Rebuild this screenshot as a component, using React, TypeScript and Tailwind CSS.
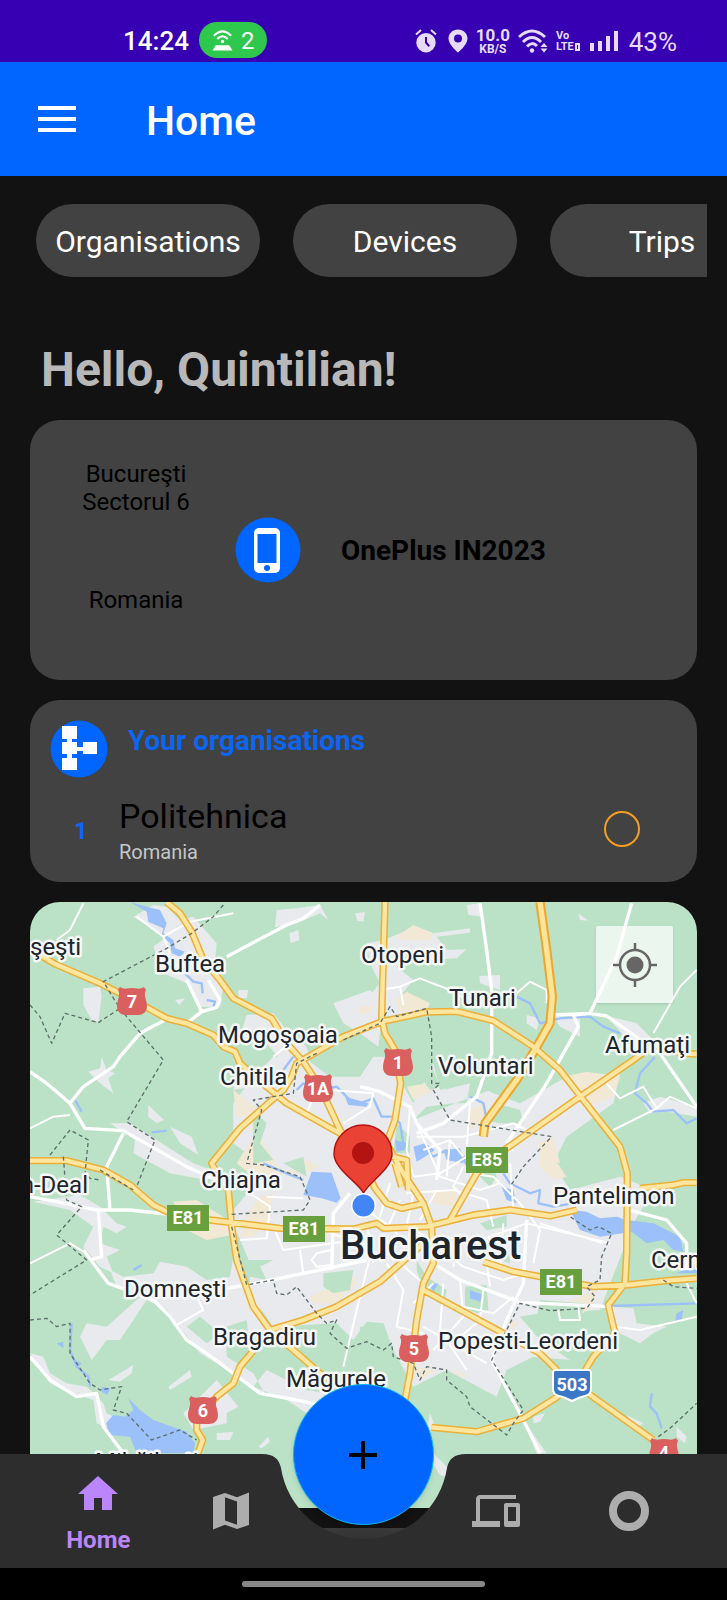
import type { ReactNode } from "react";

const YELLOW_ROADS = [
  "M60 195L105 222L240 280L340 330L440 385L500 400L580 435L610 470L645 485L660 520L740 590L800 640L960 730L1020 800L1065 895L1100 940L1145 955L1210 940",
  "M440 36L480 70L515 125L550 210L600 270L640 325L755 385L800 460L850 515L900 590L960 720L1010 790",
  "M580 830L575 820L660 715L790 600L815 560L830 520L970 440L1085 395L1220 366L1310 364L1420 392L1540 470L1620 540L1690 630L1800 770L1822 850L1820 1090L1815 1180L1765 1245L1785 1330L1720 1400L1690 1450L1610 1522L1510 1585L1370 1625L1235 1612",
  "M580 830L625 900L635 1010L650 1110L700 1250L750 1320L820 1380L900 1450L960 1490",
  "M30 812L140 812L250 840L330 885L400 945L440 965L570 990L780 1015L1000 1017L1070 1000L1090 1015L1220 1010L1360 975L1470 960L1590 978L1670 960",
  "M1095 36L1085 385L1095 430L1125 480L1142 580L1125 690L1100 760L1150 850L1210 940L1235 1010L1240 1120L1210 1180L1190 1290L1170 1450L1155 1530",
  "M2030 492L1985 490L1900 465L1840 510L1680 620L1460 775L1370 850L1290 990",
  "M1390 1115L1480 1145L1560 1160L1720 1190L1820 1185L1940 1172L2030 1165",
  "M1860 895L1960 885L1990 878L2030 878",
  "M1210 1200L1450 1330L1560 1390L1620 1450L1760 1550L1900 1650",
  "M750 1320L850 1290L950 1250L1080 1175L1210 1060",
  "M710 1370L660 1430L640 1480L590 1520L530 1590L530 1620L548 1650L530 1700",
  "M1115 800L1160 810L1165 900M1125 820L1145 890",
];

const MOTORWAY =
  "M1560 36L1580 180L1597 320L1590 400L1545 480L1490 570L1395 700L1390 740";

const WHITE_ROADS = [
  "M620 200L800 105L850 85L900 45",
  "M565 270L600 330L590 352L545 365L500 400M545 365L500 270",
  "M445 385L360 430L300 500L280 530L190 590L150 640",
  "M30 545L80 580L150 640L195 715L310 722L500 830L590 870",
  "M310 730L260 830L270 960",
  "M30 920L110 935L230 960L330 960L440 972",
  "M235 960L245 1100L210 1110",
  "M190 1080L265 1180L320 1200L400 1230L450 1280L500 1350L560 1390L640 1450L720 1510L830 1530L1000 1570",
  "M590 1200L680 1185L900 1140L1040 1110",
  "M30 1400L90 1470L170 1520L230 1510L250 1610L310 1690",
  "M990 910L940 970L935 1140",
  "M1380 40L1400 180L1415 300L1415 490L1370 620L1270 700L1190 730",
  "M1835 40L1790 200L1710 370L1660 375L1675 410L1580 580L1460 760",
  "M1600 375L1710 370L1760 378L1820 420L1920 490L2030 650",
  "M1020 590L1080 605L1170 650L1190 700L1260 780L1250 870",
  "M1820 958L1940 990L2000 1060L2000 1140",
  "M1240 1120L1320 1170L1500 1237L1770 1250",
  "M1520 990L1510 1180L1460 1290L1415 1410L1510 1590L1560 1690",
];

const THIN_ROADS = [
  "M190 40L150 120L110 150M30 715L100 680L150 675M350 80L430 140L450 190M430 140L510 95L640 70",
  "M30 1120L150 1060L190 1085M470 1305L550 1260L530 1220M760 500L820 450M860 670L880 620L930 600L1060 610M970 700L1050 650L1060 610",
  "M1080 300L1140 290L1200 265L1290 300L1340 330M1490 310L1530 275L1580 300L1580 340M1140 290L1150 345",
  "M1760 580L1800 625L1870 590L1910 655L1780 720M1910 655L1950 620L2030 655M2030 240L1980 290L1900 430M1780 1250L1780 1310L1860 1320L2030 1280M2000 1180L2030 1240M1350 640L1340 770M1190 740L1330 740L1480 700L1520 720",
  "M660 1050L740 1045L750 950L690 910M740 920L850 925M760 1010L790 1080L1010 1050M840 1080L850 1150M935 1080L890 1090L875 1110L890 1130L935 1125M1050 1100L1010 1260L970 1430M1040 1000L1060 1120M930 1030L1060 1070",
  "M1170 650L1160 780L1180 860M1190 700L1260 860L1380 900L1440 880M1160 910L1300 900L1400 930L1420 1010M1180 860L1260 850L1340 800L1480 780M1210 780L1290 750L1330 800M1350 850L1420 860L1500 940L1560 1020L1540 1120M1470 820L1480 960",
  "M1240 1040L1380 1050L1520 1000L1770 1060M1260 1080L1330 1130L1450 1170L1510 1150M1320 1030L1300 1130M1390 1050L1410 1190M1450 1000L1440 1140M1560 1000L1750 1060M1100 1120L1150 1200L1130 1310L1210 1330M1130 1110L1210 1180",
  "M1270 1180L1260 1320L1340 1440M1320 1170L1330 1280L1240 1380M1330 1250L1420 1270L1480 1220M1390 1200L1380 1290L1310 1350M1240 1180L1180 1240M1210 1310L1400 1420M1615 1260L1620 1290L1680 1290L1675 1250",
  "M1040 960L1110 1010L1180 1080M1110 880L1080 980M1140 930L1100 1020M1180 910L1160 1010L1260 1060M1250 900L1200 990M1330 830L1300 890L1340 930M1420 810L1370 850M1290 750L1280 860",
];

const URBAN = [
  "M700 560L760 500L850 500L930 560L1020 560L1060 500L1100 500L1180 640L1240 520L1260 600L1350 570L1420 610L1500 640L1640 560L1800 550L1780 640L1640 740L1600 820L1650 900L1800 860L1900 900L1840 1000L1790 1130L1740 1260L1560 1270L1500 1280L1560 1350L1650 1410L1540 1400L1460 1440L1430 1520L1280 1440L1180 1490L1120 1380L1090 1300L1040 1295L1000 1350L950 1300L760 1310L690 1210L690 1120L640 1000L640 930L720 820L640 760L640 640Z",
  "M340 80L400 45L440 50L480 90L520 80L590 160L585 215L610 290L600 350L540 350L500 280L430 250L400 170L440 140Z",
  "M770 60L830 55L900 45L925 90L900 70L830 100L765 112ZM808 130L835 120L838 150L812 160ZM1005 70L1035 66L1030 95L1012 92ZM655 300L685 300L680 325L655 325Z",
  "M190 295L240 290L245 320L235 395L215 390L190 345ZM465 330L495 325L478 345ZM205 545L240 535L245 500L260 540L285 550L265 565L280 610L240 580Z",
  "M385 645L432 690L410 700L385 680ZM450 710L515 740L535 795L480 760ZM270 700L330 700L520 820L600 850L560 870L450 850L340 790L345 750Z",
  "M680 375L760 370L800 420L860 470L880 560L790 600L700 590L640 600L650 540L730 540L790 520L740 460L660 440Z",
  "M1040 160L1090 150L1190 110L1240 130L1350 115L1350 128L1250 140L1280 180L1340 178L1310 205L1230 210L1170 180L1130 230L1180 270L1130 330L1210 340L1220 370L1080 380L1020 350L1080 280L1050 220Z",
  "M1340 45L1380 40L1390 80L1345 75ZM1378 258L1440 255L1440 300L1380 280ZM1520 375L1560 385L1550 420L1520 400ZM1600 380L1680 380L1680 440L1620 410ZM1760 378L1850 400L1900 450L1950 500L1840 470ZM1675 70L1705 92L1680 90Z",
  "M1870 640L1920 620L2030 650L2030 680L1940 665L1890 670ZM940 340L1050 300L1090 340L1075 470L1020 430L970 400Z",
  "M40 935L180 915L240 950L290 1000L320 1010L290 1030L250 1010L240 1060L300 1080L260 1100L280 1150L240 1130L190 1070L220 1010L150 960Z",
  "M270 1140L310 1160L400 1150L420 1115L500 1130L560 1170L630 1160L640 1100L700 1210L750 1320L620 1400L700 1450L740 1520L700 1500L640 1450L540 1390L440 1260L380 1230L300 1350L260 1350L215 1410L180 1340L200 1300L260 1310L360 1220L290 1190Z",
  "M265 1470L340 1425L335 1450L300 1475ZM445 1490L510 1440L515 1460L450 1500ZM590 1470L655 1550L620 1570L620 1600L520 1620L490 1570ZM590 1630L640 1625L630 1650L590 1650ZM715 1670L745 1640L750 1655L725 1675ZM740 1440L700 1490L800 1530L860 1570L920 1510L860 1500Z",
  "M30 1390L70 1400L90 1450L140 1480L200 1490L250 1540L260 1570L300 1590L280 1620L230 1600L220 1530L130 1500L90 1480Z",
  "M1780 1250L1840 1255L1850 1300L1940 1310L1900 1330L1860 1360L1780 1320ZM1230 1570L1250 1620L1220 1620ZM1820 1575L1870 1600L1850 1615ZM1970 1610L2000 1640L1995 1660L1970 1640ZM1540 1580L1575 1570L1560 1595L1540 1600ZM1510 1590L1580 1690L1550 1690Z",
  "M1240 1690L1290 1740L1310 1770L1260 1755L1235 1715ZM900 1760L950 1740L920 1830L890 1800Z",
];

const BEIGE = [
  "M640 600L690 640L720 660L720 740L780 840L830 840L860 810L900 830L840 850L700 860L650 820L700 740L690 680L650 680Z",
  "M1130 140L1180 105L1240 130L1230 150L1150 150ZM1125 330L1160 305L1230 340L1220 360L1140 365ZM1630 560L1700 545L1800 560L1780 620L1700 650L1680 610Z",
  "M1160 590L1220 580L1250 595L1180 630ZM1350 660L1400 640L1390 690L1350 720ZM1550 760L1600 740L1620 820L1570 800ZM1230 900L1310 900L1300 950L1240 940Z",
  "M1470 1290L1500 1300L1470 1320ZM1630 1240L1730 1200L1720 1250L1670 1280ZM870 1220L1000 1160L1010 1180L950 1240L880 1240ZM1300 1440L1350 1460L1320 1460ZM460 935L530 930L640 1000L660 1030L560 1050L500 1020Z",
  "M1020 350L1060 345L1050 370L1020 370ZM1560 760L1600 800L1640 860L1600 870L1560 830ZM1180 1430L1250 1440L1200 1470ZM720 920L760 910L750 990L700 1040L660 1040L690 960Z",
];

const GREEN = [
  "M1180 690L1220 650L1300 640L1340 640L1350 580L1270 600L1380 520L1410 600L1280 650L1180 690Z",
  "M1390 690L1430 640L1500 660L1510 700L1440 700ZM1200 560L1240 540L1260 590L1230 600Z",
  "M1335 1190L1400 1185L1405 1260L1370 1270L1335 1255ZM1190 1110L1220 1160L1280 1200L1270 1250L1210 1200L1190 1140ZM1380 1000L1460 975L1460 1010L1400 1020ZM1410 1100L1470 1080L1470 1120Z",
  "M910 1150L1000 1140L990 1200L940 1210L910 1190ZM680 1110L760 1110L720 1130L740 1170L690 1160ZM620 1310L680 1290L690 1370L620 1400ZM1020 1310L1090 1300L1110 1370L1060 1400L1020 1360ZM1560 1230L1690 1240L1680 1330L1590 1340L1550 1280Z",
  "M1130 700L1170 740L1170 790L1120 790ZM700 660L740 700L720 760L760 810L700 820ZM590 860L690 900L640 960L590 910ZM500 1310L540 1280L600 1330L560 1360ZM790 820L850 800L860 860Z",
  "M1380 860L1420 830L1430 860L1410 890Z",
];

const WATER = [
  "M330 36L380 50L420 60L440 100L430 130L460 150L465 175L495 185L480 200L455 190L450 160L425 135L430 115L385 95L380 65Z",
  "M875 845L935 848L962 925L950 938L905 925L850 915Z",
  "M325 1525L360 1560L400 1590L500 1625L525 1660L520 1690L350 1690L330 1640L270 1635L258 1600L280 1575L315 1580L340 1560Z",
  "M245 1490L270 1495L262 1515L245 1505ZM110 1360L130 1355L130 1375ZM155 1405L185 1420L175 1430Z",
  "M1125 750L1160 760L1155 780L1130 785ZM1180 770L1215 760L1245 780L1215 800L1190 815ZM1270 780L1320 775L1330 820L1280 810ZM1445 890L1480 900L1490 940L1460 930Z",
  "M1650 960L1700 965L1740 985L1790 980L1820 990L1900 1000L1980 1040L1990 1085L1960 1080L1930 1050L1880 1060L1835 1025L1740 1040L1680 1020Z",
  "M1320 800L1370 790L1390 810L1340 830ZM1350 1200L1390 1215L1380 1235L1350 1225ZM1230 1185L1255 1180L1240 1205ZM1970 1150L2030 1120L2030 1150ZM975 620L1045 640L1040 650L985 645ZM1970 1270L1990 1260L1985 1290L1965 1295Z",
];

const STREAMS = [
  "M495 250L520 275L545 280L548 310M560 330L585 335L580 350M165 630L185 665M395 727L440 722M820 500L790 540M830 600L850 580L900 600L950 590L1000 640",
  "M1020 640L1060 625L1085 680L1120 680L1140 700L1150 760M1490 320L1530 340L1560 400L1620 385L1710 380L1750 410L1800 430M1905 500L1860 550L1845 610L1880 640L1900 665L1960 660L2000 700L2030 685",
  "M1350 620L1390 640L1400 690M1190 790L1220 780L1240 800L1280 780M1450 850L1470 880L1530 910L1560 900L1555 940L1600 950L1660 940",
  "M155 1300L150 1380L170 1430L205 1460L210 1490M340 1140L365 1125M1895 1510L1890 1550L1910 1570L1925 1615M1770 1248L2030 1240M730 820L800 850L850 870",
];

const BORDERS =
  "M610 45L580 80L515 130L440 175L250 275L290 340L320 380L430 510L320 695L405 750L350 890M30 345L60 380L95 460L135 370L235 398L300 355M90 795L150 720L205 750L195 850L210 865L240 870M130 800L140 930L185 950L110 1035L200 1110L30 1215M30 1290L80 1285L110 1310L150 1300L150 1390L210 1480L240 1500L305 1490L280 1560L320 1570L395 1650L480 1620L530 1650M240 840L340 900M635 973L850 960L870 930L840 860L730 825L680 820L725 660L700 630L820 610L830 520L890 490M970 450L1080 400L1110 350L1130 380L1220 355L1235 440L1235 580L1260 580L1240 600L1290 690L1595 740L1510 830L1470 890M635 1010L680 1185L760 1170L770 1210L800 1215L830 1190L890 1270L920 1300L950 1290L930 1330L980 1375L1040 1355L1090 1380L1115 1360L1120 1400L1180 1420L1200 1470L1220 1430L1280 1440L1280 1470L1340 1520L1350 1550L1460 1635L1480 1600L1510 1560L1415 1410L1500 1240L1590 1262L1700 1255L1725 1220L1700 1190L1740 1170L1745 1100L1775 1030L1735 1010L1710 1020L1650 980M1915 1640L1950 1615L2030 1540M1930 1170L1960 1190L2030 1195";

const PLACES: [string, number, number][] = [
  ["şeşti", 0, 53],
  ["Buftea", 125, 70],
  ["Otopeni", 331, 61],
  ["Tunari", 419, 104],
  ["Mogoşoaia", 188, 141],
  ["Chitila", 190, 183],
  ["Voluntari", 408, 172],
  ["Afumaţi", 575, 151],
  ["Chiajna", 171, 286],
  ["Pantelimon", 523, 302],
  ["Domneşti", 94, 395],
  ["Cernica", 621, 366],
  ["Bragadiru", 183, 443],
  ["Popesti-Leordeni", 408, 447],
  ["Măgurele", 256, 485],
  ["Mihăileşti", 65, 568],
];

const SHIELDS: [string, number, number][] = [
  ["7", 102, 99],
  ["1A", 288, 186],
  ["1", 368, 160],
  ["5", 384, 446],
  ["6", 173, 508],
  ["4", 634, 550],
];

const EURO_ROUTES: [string, number, number][] = [
  ["E85", 436, 245],
  ["E81", 137, 303],
  ["E81", 253, 314],
  ["E81", 510, 367],
];

function AreaMap() {
  return (
    <svg
      viewBox="0 0 667 606"
      preserveAspectRatio="xMidYMid slice"
      className="block w-full"
      role="img"
      aria-label="Map of Bucharest"
    >
      <rect width="667" height="606" fill="#bbe2c6" />
      <g transform="scale(.33333) translate(-30 -36)" fill="none" strokeLinejoin="round">
        <path d={URBAN.join("")} fill="#e8eaed" />
        <path d={BEIGE.join("")} fill="#f1e8d5" />
        <path d={GREEN.join("")} fill="#bbe2c6" />
        <path d={WATER.join("")} fill="#9cc0f9" />
        <path d={STREAMS.join("")} stroke="#9cc0f9" strokeWidth="7" />
        <path d={THIN_ROADS.join("")} stroke="#fff" strokeWidth="6" />
        <path d={WHITE_ROADS.join("")} stroke="#fff" strokeWidth="10" />
        <path d={YELLOW_ROADS.join("")} stroke="#eab038" strokeWidth="22" />
        <path d={MOTORWAY} stroke="#eba82c" strokeWidth="28" />
        <path d={YELLOW_ROADS.join("")} stroke="#fee6a0" strokeWidth="13" />
        <path d={MOTORWAY} stroke="#fee39a" strokeWidth="16" />
        <path d={BORDERS} stroke="#5f6f6c" strokeWidth="4" strokeDasharray="12 9" />
      </g>

      {EURO_ROUTES.map(([name, x, y]) => (
        <g key={`${name}-${x}`}>
          <rect x={x} y={y} width="42" height="26" fill="#689f3f" />
          <text x={x + 21} y={y + 19} textAnchor="middle" fill="#fff" className="text-[18px] font-bold">
            {name}
          </text>
        </g>
      ))}
      {SHIELDS.map(([name, x, y]) => (
        <g key={name}>
          <path
            transform={`translate(${x} ${y})`}
            d="M-12-14C-8-11-4-13 0-13S8-11 12-14L14-11C11-6 15-1 15 5C15 11 11 14 6 14H-6C-11 14-15 11-15 5C-15-1-11-6-14-11Z"
            fill="#d9605f"
          />
          <text x={x} y={y + 7} textAnchor="middle" fill="#fff" className="text-[18px] font-bold">
            {name}
          </text>
        </g>
      ))}
      <path
        d="M525 468H559Q561 468 561 471V487Q561 493 555 494C550 495 546 497 542 499C538 497 534 495 529 494Q523 493 523 487V471Q523 468 525 468Z"
        fill="#3b77c5"
        stroke="#fff"
        strokeWidth="2"
      />
      <text x="542" y="489" textAnchor="middle" fill="#fff" className="text-[18px] font-bold">
        503
      </text>

      <g fill="#20242b" stroke="#f6f8f8" strokeWidth="5" strokeLinejoin="round" paintOrder="stroke">
        {PLACES.map(([name, x, y]) => (
          <text key={name} x={x} y={y} className="text-[24px]">
            {name}
          </text>
        ))}
        <text x="58" y="291" textAnchor="end" className="text-[24px]">
          n-Deal
        </text>
        <text x="310" y="357" className="text-[40px] font-medium">
          Bucharest
        </text>
      </g>

      <path
        d="M333.500 291C329 281 304 267 304 252A29 29 0 0 1 362 252C362 267 338 281 333.500 291Z"
        fill="#ea4335"
        stroke="#b31412"
        strokeWidth="1.500"
      />
      <circle cx="333" cy="251" r="11" fill="#b31412" />
      <circle cx="333.500" cy="303.500" r="12.500" fill="#fff" />
      <circle cx="333.500" cy="303.500" r="11" fill="#4285f4" />
    </svg>
  );
}

function StatusBar() {
  return (
    <div className="flex h-[62px] items-end justify-between bg-[#3700b3] pr-[50px] pb-[3px] pl-[123px] text-[26px] text-[#e6dcf8]">
      <div className="flex items-center gap-[10px]">
        <span className="pt-[2px] leading-9 font-medium text-white">14:24</span>
        <span className="flex h-9 items-center gap-2 rounded-full bg-[#2fc84f] px-[13px] text-[24px] text-white">
          <svg viewBox="0 0 22 22" className="w-[21px]" fill="none" stroke="#fff" strokeWidth="2.200">
            <path d="M2 6Q11-3 20 6M5.500 9.500Q11 3.500 16.500 9.500" />
            <circle cx="11" cy="12" r="1.800" fill="#fff" stroke="none" />
            <path d="M4 16H18L21.500 21.500H.500Z" fill="#fff" stroke="none" />
          </svg>
          <span className="pt-[2px]">2</span>
        </span>
      </div>
      <div className="flex h-9 items-center gap-2">
        <svg viewBox="0 0 22 24" className="w-[22px]" fill="#e6dcf8">
          <path fillRule="evenodd" d="M11 4A9.700 9.700 0 1 0 11 23.400A9.700 9.700 0 0 0 11 4ZM10 8H12V13L15 16.500L13.500 18L10 14Z" />
          <path d="M1 5.500L6 1M21 5.500L16 1" stroke="#e6dcf8" strokeWidth="2" />
        </svg>
        <svg viewBox="0 0 20 24" className="ml-[3px] w-5" fill="#e6dcf8">
          <path fillRule="evenodd" d="M10 .500C4.500.500.500 4.500.500 9.500C.500 16 10 23.500 10 23.500S19.500 16 19.500 9.500C19.500 4.500 15.500.500 10 .500ZM10 5.500A4 4 0 1 1 10 13.500A4 4 0 0 1 10 5.500Z" />
        </svg>
        <span className="flex flex-col items-center font-bold">
          <span className="text-[17px] leading-4">10.0</span>
          <span className="text-[12px] leading-3">KB/S</span>
        </span>
        <svg viewBox="0 0 30 24" className="w-[30px]" fill="none" stroke="#e6dcf8" strokeWidth="3">
          <path d="M1 8Q14-4 27 8M5 13Q14 4 23 13M9 17.500Q14 12 19 17" />
          <circle cx="14" cy="21.500" r="2.200" fill="#e6dcf8" stroke="none" />
          <path d="M26 14L29.500 18H22.500ZM26 23.500L29.500 19.500H22.500Z" fill="#e6dcf8" stroke="none" />
        </svg>
        <span className="flex flex-col text-[11px] leading-[11px] font-bold">
          <span>Vo</span>
          <span className="flex items-center gap-px">
            LTE
            <span className="h-2 w-[5px] border-2 border-[#e6dcf8]" />
          </span>
        </span>
        <svg viewBox="0 0 28 20" className="mr-[3px] ml-[2px] w-7" fill="#e6dcf8">
          <path d="M0 12H4V20H0ZM8 10H12V20H8ZM16 5H20V20H16ZM24 0H28V20H24Z" />
        </svg>
        <span className="pt-[2px] leading-9">43%</span>
      </div>
    </div>
  );
}

function NavItem({ label, active, children }: { label: string; active?: boolean; children: ReactNode }) {
  return (
    <a
      href="#"
      aria-label={label}
      className={
        active
          ? "flex h-[114px] min-w-0 flex-1 flex-col items-center pt-4 text-[24px] leading-7 font-bold text-[#bb86fc]"
          : "flex h-[114px] min-w-0 flex-1 flex-col items-center justify-center text-[#adadad]"
      }
    >
      <svg viewBox="0 0 24 24" className="w-12" fill="currentColor">
        {children}
      </svg>
      {active && <span className="mt-2">{label}</span>}
    </a>
  );
}

function BottomNav() {
  return (
    <nav className="sticky bottom-0 -mt-[74px]">
      <div className="relative">
        <div className="absolute inset-0 flex">
          <div className="flex-1 bg-[#2d2d2d]" />
          <svg viewBox="0 0 220 114" className="w-[220px] shrink-0">
            <defs>
              <linearGradient id="scrim" x1="0" y1="0" x2="0" y2="1">
                <stop offset="0" stopColor="#3a3a3a" />
                <stop offset="1" stopColor="#303030" />
              </linearGradient>
            </defs>
            <rect x="50" y="74" width="120" height="14" fill="url(#scrim)" />
            <path d="M0 0H8C20 0 25 5 27 14A84 84 0 0 0 193 14C195 5 200 0 212 0H220V114H0Z" fill="#2d2d2d" />
          </svg>
          <div className="flex-1 bg-[#2d2d2d]" />
        </div>
        <div className="relative flex px-8">
          <NavItem label="Home" active>
            <path d="M10 20v-6h4v6h5v-8h3L12 3 2 12h3v8z" />
          </NavItem>
          <NavItem label="Map">
            <path d="M15 5.100L9 3 3 5.020v16.200l6-2.330 6 2.100 6-2.020V2.770L15 5.100zm0 13.790l-6-2.110V5.110l6 2.110v11.670z" />
          </NavItem>
          <div className="flex min-w-0 flex-1 justify-center">
            <button
              type="button"
              aria-label="Add"
              className="-mt-[70px] flex size-[141px] shrink-0 items-center justify-center rounded-full border border-[#10b5e8] bg-[#0066ff] shadow-md"
            >
              <svg viewBox="0 0 30 30" className="w-[30px]" stroke="#000" strokeWidth="4">
                <path d="M15 1V29M1 15H29" />
              </svg>
            </button>
          </div>
          <NavItem label="Devices">
            <path d="M4 6h18V4H4c-1.100 0-2 .9-2 2v11H0v3h14v-3H4V6zm19 2h-6c-.55 0-1 .45-1 1v10c0 .55.45 1 1 1h6c.55 0 1-.45 1-1V9c0-.55-.45-1-1-1zm-1 9h-4v-7h4v7z" />
          </NavItem>
          <NavItem label="Trips">
            <circle cx="12" cy="12" r="8" fill="none" stroke="currentColor" strokeWidth="4" />
          </NavItem>
        </div>
      </div>
      <div className="flex h-8 items-center justify-center bg-black">
        <div className="h-[6px] w-1/3 rounded-full bg-[#888888]" />
      </div>
    </nav>
  );
}

export default function App() {
  return (
    <div className="min-h-screen bg-[#121212] font-['Roboto',sans-serif]">
      <StatusBar />
      <header className="flex h-[114px] items-center gap-[70px] bg-[#0066ff] px-[38px] text-white">
        <button type="button" aria-label="Open menu" className="flex flex-col gap-[7px]">
          <span className="h-1 w-[38px] bg-white" />
          <span className="h-1 w-[38px] bg-white" />
          <span className="h-1 w-[38px] bg-white" />
        </button>
        <h1 className="pt-1 text-[41px] leading-[48px] font-medium">Home</h1>
      </header>

      <main className="pb-5">
        <div className="mt-7 mr-5 ml-9 flex gap-[33px] overflow-hidden">
          {["Organisations", "Devices", "Trips"].map((name) => (
            <button
              key={name}
              type="button"
              className="h-[73px] w-56 shrink-0 rounded-full bg-[#424242] pt-[2px] text-[30px] text-white"
            >
              {name}
            </button>
          ))}
        </div>

        <h2 className="mt-[65px] mb-[22px] ml-[41px] text-[48px] leading-[56px] font-bold text-[#b8b8b8]">
          Hello, Quintilian!
        </h2>

        <div className="mx-[30px] flex flex-col gap-5">
          <section className="flex h-[260px] items-center rounded-[30px] bg-[#424242] text-black">
            <div className="ml-[36px] flex w-[140px] flex-col items-center pb-[26px] text-center text-[24px] leading-7">
              <p>
                Bucureşti
                <br />
                Sectorul 6
              </p>
              <p className="mt-[70px]">Romania</p>
            </div>
            <svg viewBox="0 0 66 66" className="ml-[29px] w-[66px] shrink-0">
              <circle cx="33" cy="33" r="32.500" fill="#0066ff" />
              <rect x="19" y="11" width="26" height="45" rx="5" fill="#fff" />
              <rect x="22.500" y="17" width="19" height="29" fill="#0066ff" />
              <circle cx="32" cy="51" r="3" fill="#0066ff" />
            </svg>
            <p className="ml-10 pt-[2px] text-[28px] font-bold">OnePlus IN2023</p>
          </section>

          <section className="h-[182px] rounded-[30px] bg-[#424242] pt-5 pr-[57px] pl-5">
            <div className="flex gap-5">
              <svg viewBox="0 0 58 58" className="w-[58px] shrink-0">
                <circle cx="29" cy="29" r="28.500" fill="#0066ff" />
                <path
                  d="M12 6H27V19H22V22H27V27H33V22H47V34H33V31H27V34H22V38H27V50H12V38H17V34H12V22H17V19H12Z"
                  fill="#fff"
                />
              </svg>
              <h3 className="mt-[5px] text-[28px] leading-8 font-bold text-[#0b66f2]">Your organisations</h3>
            </div>
            <div className="mt-[18px] flex items-start">
              <span className="w-[62px] pt-[19px] text-center text-[24px] leading-8 font-bold text-[#0b66f2]">1</span>
              <div className="ml-[7px] flex-1">
                <p className="text-[34px] leading-10 text-black">Politehnica</p>
                <p className="text-[20px] leading-8 text-[#c6c6c6]">Romania</p>
              </div>
              <span className="mt-[15px] size-9 rounded-full border-2 border-[#f59f1c]" />
            </div>
          </section>

          <section className="relative overflow-hidden rounded-t-[30px]">
            <AreaMap />
            <button
              type="button"
              aria-label="My location"
              className="absolute top-6 right-6 flex size-[77px] items-center justify-center rounded-xs bg-white/70 shadow"
            >
              <svg viewBox="0 0 44 44" className="w-11" fill="none" stroke="#666" strokeWidth="2.500">
                <circle cx="22" cy="22" r="15" />
                <circle cx="22" cy="22" r="8.500" fill="#666" stroke="none" />
                <path d="M22 0V7M22 37V44M0 22H7M37 22H44" />
              </svg>
            </button>
          </section>
        </div>
      </main>
      <BottomNav />
    </div>
  );
}
